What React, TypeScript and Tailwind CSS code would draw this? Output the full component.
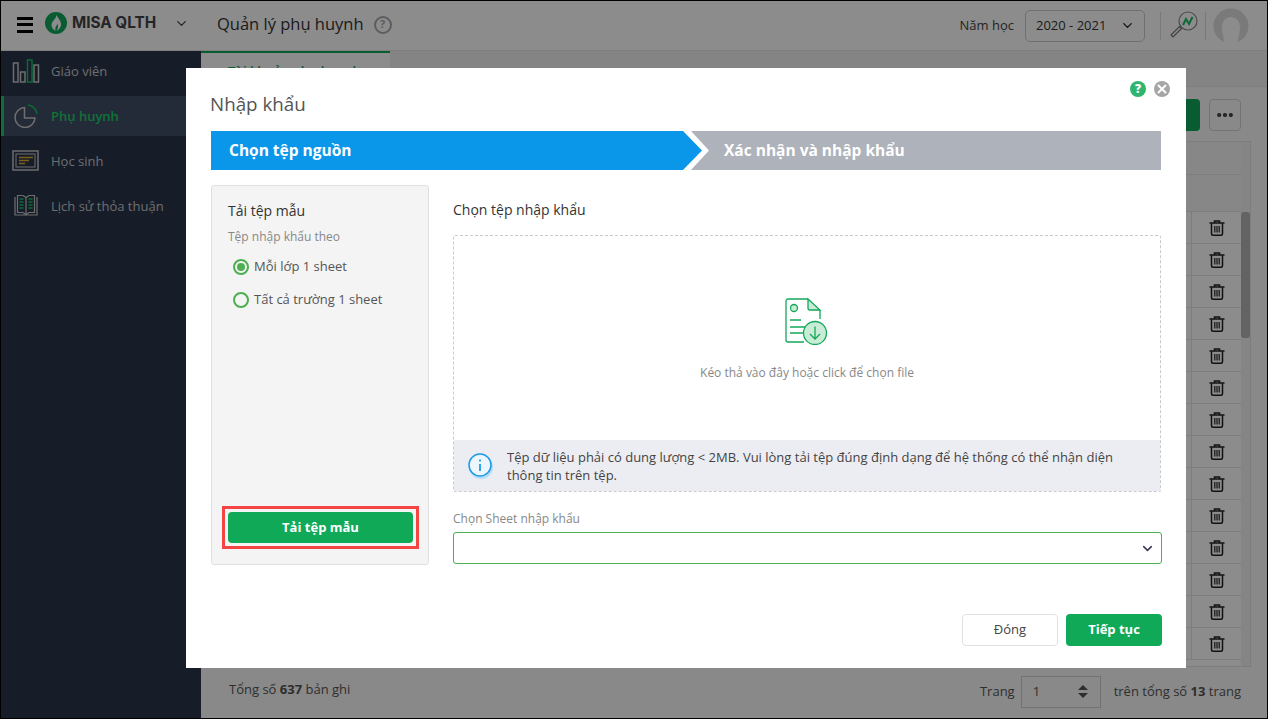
import { ChevronDown, Ellipsis } from "lucide-react";

const FONT = "font-['Open_Sans',sans-serif]";

const NAV_ITEMS = [
  { label: "Giáo viên", icon: <BarsIcon />, active: false },
  { label: "Phụ huynh", icon: <PieIcon />, active: true },
  { label: "Học sinh", icon: <BoardIcon />, active: false },
  { label: "Lịch sử thỏa thuận", icon: <BookIcon />, active: false },
];

const ROWS = Array.from({ length: 14 }, (_, i) => i);

function BarsIcon() {
  return (
    <svg width="28" height="24" viewBox="0 0 28 24" fill="none" stroke="#c8c8c8" strokeWidth="1.5">
      <rect x="1.5" y="4" width="4.5" height="19" />
      <rect x="8.5" y="13" width="4.5" height="10" />
      <rect x="15.5" y="1" width="4.5" height="22" stroke="#18c262" />
      <rect x="22" y="6" width="4.5" height="17" />
    </svg>
  );
}

function PieIcon() {
  return (
    <svg width="24" height="24" viewBox="0 0 24 24" fill="none" strokeWidth="1.5">
      <path d="M10.5 3.5a10 10 0 1 0 10.5 10.5H10.5z" stroke="#c8c8c8" />
      <path d="M14 1a10 10 0 0 1 9 9" stroke="#18c262" />
    </svg>
  );
}

function BoardIcon() {
  return (
    <svg width="28" height="22" viewBox="0 0 28 22" fill="none">
      <rect x="1" y="1" width="25" height="19" stroke="#c8c8c8" strokeWidth="1.5" />
      <rect x="4" y="4" width="19" height="13" stroke="#c8c8c8" strokeWidth="1" />
      <path d="M7 7.5h14M7 10.5h10M7 13.5h6" stroke="#e2b030" strokeWidth="1.5" />
    </svg>
  );
}

function BookIcon() {
  return (
    <svg width="28" height="24" viewBox="0 0 28 24" fill="none" strokeWidth="1.2">
      <path d="M3 3v18h22V3" stroke="#c8c8c8" />
      <path d="M5.5 1.5H11l3 2 3-2h5.5v17H17l-3 2-3-2H5.5z" stroke="#c8c8c8" />
      <path d="M14 3.5v17" stroke="#c8c8c8" />
      <path d="M7.5 5h4M7.5 8h4M7.5 11h4M7.5 14h4M16.5 5h4M16.5 8h4M16.5 11h4M16.5 14h4" stroke="#18c262" strokeWidth="1.5" />
    </svg>
  );
}

function TrashIcon() {
  return (
    <svg width="16" height="16" viewBox="0 0 16 16" fill="none" stroke="#1f1f1f" strokeWidth="1.5">
      <path d="M0.5 3h15M5.5 2.5V1h5v1.5" />
      <path d="M2.5 3.5v10.2A1.5 1.5 0 0 0 4 15.2h8a1.5 1.5 0 0 0 1.5-1.5V3.5" />
      <path d="M5.8 6v6.5M8 6v6.5M10.2 6v6.5" strokeWidth="1.2" />
    </svg>
  );
}

function Logo() {
  return (
    <svg width="22" height="22" viewBox="0 0 22 22">
      <circle cx="11" cy="11" r="11" fill="#12a65a" />
      <path d="M11.5 3c1 3 4.5 5 4.5 9.5 0 3-2 5-4.5 6.5 1.5-2.5 2-5 .8-7.5-.5 2-1.3 2.5-1.8 4-.4 1.3-.1 2.5.2 3.5C8 17.5 6.5 15.5 6.5 13c0-4 4.500-5.500 5-10z" fill="#fff" />
    </svg>
  );
}

function Magnifier() {
  return (
    <svg width="28" height="28" viewBox="0 0 28 28" fill="none">
      <circle cx="18" cy="10" r="9" stroke="#8a8a8a" strokeWidth="1.2" />
      <path d="M11.5 17.5L3 26l-2-2 8.5-8.5z" fill="#fff" stroke="#777" strokeWidth="1.2" />
      <path d="M13 14l3-6 3 5 3.5-7" stroke="#18c262" strokeWidth="2" />
    </svg>
  );
}

function FileIcon() {
  return (
    <svg width="44" height="48" viewBox="0 0 44 48" fill="none" stroke="#14a85b" strokeWidth="1.3">
      <path d="M24 2H4a2 2 0 0 0-2 2v39a2 2 0 0 0 2 2h16M36 13v9" />
      <path d="M24 2l12 11H26a2 2 0 0 1-2-2z" fill="#c9ecd6" />
      <circle cx="10" cy="11" r="3.5" fill="#c9ecd6" />
      <path d="M6 23h11M6 30h16M6 36h13" />
      <circle cx="31" cy="36" r="11.5" fill="#c9ecd6" />
      <path d="M31 29.5V42M26 37l5 5 5-5" />
    </svg>
  );
}

function InfoIcon() {
  return (
    <svg width="28" height="28" viewBox="0 0 28 28" fill="none">
      <circle cx="14" cy="15" r="12" fill="#b9dcf5" />
      <circle cx="13" cy="13" r="11" fill="#eef6fd" stroke="#1a9bea" strokeWidth="1.5" />
      <path d="M13 12v7" stroke="#1a9bea" strokeWidth="1.8" />
      <circle cx="13" cy="8.5" r="1.1" fill="#1a9bea" />
    </svg>
  );
}

function Radio({ label, checked }: { label: string; checked?: boolean }) {
  return (
    <div className="flex items-center gap-[5px] h-[16px] pl-[5px] text-[13px] text-[#555]">
      <span className="w-4 h-4 rounded-full border-2 border-[#4caf50] flex items-center justify-center">
        {checked && <span className="w-2 h-2 rounded-full bg-[#4caf50]" />}
      </span>
      {label}
    </div>
  );
}

export default function App() {
  return (
    <div className={`${FONT} relative w-[1268px] h-[719px] overflow-hidden border border-black bg-[#fff] flex flex-col`}>
      <header className="h-[50px] shrink-0 flex items-center bg-white border-b border-[#e8e8e8] text-[#333]">
        <div className="ml-4 w-4 mt-[-2px] flex flex-col gap-[3.5px]">
          <span className="h-[3px] bg-black" />
          <span className="h-[3px] bg-black" />
          <span className="h-[3px] bg-black" />
        </div>
        <div className="ml-3 mt-[-5px]">
          <Logo />
        </div>
        <span className="ml-[5px] mt-[-5px] font-['Inter',sans-serif] font-bold text-[15.3px] text-[#444] w-[86px] whitespace-nowrap">
          MISA QLTH
        </span>
        <ChevronDown size={15} strokeWidth={2} className="ml-[16px] mt-[-4px] text-[#444]" />
        <span className="ml-[28px] text-[16.5px] text-[#333] mt-[-2px]">Quản lý phụ huynh</span>
        <span className="ml-[10px] w-[18px] h-[18px] rounded-full border-2 border-[#aaa] text-[11px] font-bold text-[#aaa] flex items-center justify-center mt-[-2px]">
          ?
        </span>
        <div className="ml-auto flex items-center text-[13px]">
          <span className="text-[#444]">Năm học</span>
          <div className="ml-[11px] w-[120px] h-8 rounded-[5px] border border-[#ccc] flex items-center justify-between pl-[10px] pr-[9px] text-[#333]">
            2020 - 2021
            <ChevronDown size={15} strokeWidth={2.2} className="text-[#222]" />
          </div>
          <span className="ml-[15px] w-px h-7 bg-[#ddd]" />
          <span className="ml-[9px] mt-[-2px]">
            <Magnifier />
          </span>
          <span className="ml-[7px] w-px h-7 bg-[#ddd]" />
          <svg width="36" height="36" viewBox="0 0 36 36" fill="none" className="ml-[7px] mr-[18px]">
            <circle cx="18" cy="18" r="17.5" fill="#dedede" />
            <path d="M10.5 36C12 31 9 27 9 19c0-6 4-10 9-10s9 4 9 10c0 8-3 12-1.5 17z" fill="#fff" />
          </svg>
        </div>
      </header>

      <div className="flex-1 min-h-0 flex">
        <aside className="w-[200px] shrink-0 bg-[#28354c] flex flex-col gap-[5px]">
          {NAV_ITEMS.map((item) => (
            <div
              key={item.label}
              className={`h-10 flex items-center border-l-[3px] text-[13px] ${
                item.active
                  ? "bg-[#434f66] border-[#1bc768] text-[#1ad068] font-semibold"
                  : "border-transparent text-[#c8c8c8]"
              }`}
            >
              <span className="w-[47px] pr-[3px] flex justify-center shrink-0">{item.icon}</span>
              <span className="mt-[2px]">{item.label}</span>
            </div>
          ))}
        </aside>

        <main className="flex-1 min-w-0 flex flex-col bg-[#fafafa]">
          <div className="h-[36px] shrink-0 bg-[#f0f0f0] border-b border-[#e5e5e5]">
            <div className="w-[189px] h-[36px] bg-white border-t-2 border-[#12a65a] pl-[27px] pt-[9px] text-[13px] font-semibold text-[#12a65a] whitespace-nowrap">
              Tài khoản phụ huynh
            </div>
          </div>
          <div className="h-[54px] shrink-0 flex justify-end items-center gap-[9px] pr-[26px] pt-[1px]">
            <span className="w-[120px] h-8 rounded-[4px] bg-[#12a65a]" />
            <span className="w-8 h-8 rounded-[4px] border border-[#d4d4d4] flex items-center justify-center">
              <Ellipsis size={20} strokeWidth={3} className="text-[#333]" />
            </span>
          </div>
          <div className="flex-1 min-h-0 ml-[28px] mr-[16px] border border-[#e3e3e3] overflow-hidden flex">
            <div className="flex-1 min-w-0 bg-white">
              <div className="h-[70px] border-b border-[#e3e3e3] bg-[#f6f6f6] flex flex-col">
                <div className="h-[33px] border-b border-[#e3e3e3]" />
              </div>
              {ROWS.map((row) => (
                <div key={row} className="h-8 border-b border-[#e3e3e3] flex justify-end">
                  <div className="w-[50px] border-l border-[#e3e3e3] flex items-center justify-center">
                    <TrashIcon />
                  </div>
                </div>
              ))}
            </div>
            <div className="w-[9px] shrink-0 bg-[#f2f2f2] pt-[70px]">
              <div className="h-[126px] rounded-[3px] bg-[#b4b4b4]" />
            </div>
          </div>
          <footer className="h-[51px] shrink-0 pl-[28px] pr-[26px] flex items-center text-[13px] text-[#555]">
            <span className="mt-[-6px]">
              Tổng số <b>637</b> bản ghi
            </span>
            <span className="ml-auto mt-[-2px]">Trang</span>
            <div className="ml-[6px] w-[80px] h-8 border border-[#cfcfcf] flex items-center justify-between pl-[11px] pr-[12px] mt-[-2px]">
              1
              <span className="flex flex-col gap-[3px]">
                <span className="w-0 h-0 border-x-[5px] border-x-transparent border-b-[5px] border-b-[#555]" />
                <span className="w-0 h-0 border-x-[5px] border-x-transparent border-t-[5px] border-t-[#555]" />
              </span>
            </div>
            <span className="ml-[13px] mt-[-2px]">
              trên tổng số <b>13</b> trang
            </span>
          </footer>
        </main>
      </div>

      {/* overlay + modal */}
      <div className="absolute inset-0 bg-black/45">
        <div className="ml-[185px] mt-[67px] w-[1000px] h-[600px] bg-white flex flex-col text-[#333]">
          <div className="flex justify-end items-center gap-2 pt-[13px] pr-4">
            <span className="w-4 h-4 rounded-full bg-[#2fb56f] text-white text-[12px] font-extrabold flex items-center justify-center">
              ?
            </span>
            <span className="w-4 h-4 rounded-full bg-[#a6a6a6] flex items-center justify-center">
              <svg width="10" height="10" viewBox="0 0 10 10" stroke="#fff" strokeWidth="2">
                <path d="M1 1l8 8M9 1l-8 8" />
              </svg>
            </span>
          </div>
          <h1 className="mt-[-5px] ml-6 h-[24px] leading-6 text-[18.8px] text-[#555]">Nhập khẩu</h1>

          <div className="mt-[15px] ml-[25px] w-[950px] h-[39px] shrink-0 flex text-[15.5px] font-bold text-white">
            <div className="w-[491px] shrink-0 bg-[#0a97ea] pl-[18px] flex items-center [clip-path:polygon(0_0,472px_0,491px_50%,472px_100%,0_100%)]">
              Chọn tệp nguồn
            </div>
            <div className="flex-1 -ml-[11px] bg-[#aeb2ba] pl-[33px] flex items-center [clip-path:polygon(0_0,100%_0,100%_100%,0_100%,18px_50%)]">
              Xác nhận và nhập khẩu
            </div>
          </div>

          <div className="mt-[15px] ml-[25px] w-[950px] h-[380px] flex gap-6">
            <div className="w-[218px] shrink-0 bg-[#f4f4f4] border border-[#e0e0e0] rounded-[3px] flex flex-col">
              <div className="pl-[16px] pt-[15px] text-sm font-medium text-[#333] leading-5">Tải tệp mẫu</div>
              <div className="pl-[16px] mt-[8px] text-xs text-[#888] leading-4">Tệp nhập khẩu theo</div>
              <div className="mt-[14px] ml-[16px] flex flex-col gap-[17px]">
                <Radio label="Mỗi lớp 1 sheet" checked />
                <Radio label="Tất cả trường 1 sheet" />
              </div>
              <div className="mt-auto mb-[15px] ml-[10px] mr-[9px] border-[3px] border-[#f44444] p-[3px]">
                <div className="h-[31px] rounded-[4px] bg-[#10a958] text-white text-[13px] font-bold flex items-center justify-center">
                  Tải tệp mẫu
                </div>
              </div>
            </div>

            <div className="flex-1 min-w-0 flex flex-col">
              <div className="h-[50px] pt-[15px] text-sm font-medium leading-5 text-[#333]">Chọn tệp nhập khẩu</div>
              <div className="h-[257px] border border-dashed border-[#c9c9c9] rounded-[2px] flex flex-col">
                <div className="flex-1 flex flex-col items-center pt-[61px]">
                  <span className="ml-[-2px]">
                    <FileIcon />
                  </span>
                  <span className="mt-[20px] text-xs leading-4 text-[#888]">Kéo thả vào đây hoặc click để chọn file</span>
                </div>
                <div className="h-[51px] bg-[#ecedf2] flex items-center pl-[13px] pr-[40px] text-[13px] leading-[18px] text-[#444]">
                  <span className="shrink-0 mt-[1px]">
                    <InfoIcon />
                  </span>
                  <span className="ml-[12px]">
                    Tệp dữ liệu phải có dung lượng &lt; 2MB. Vui lòng tải tệp đúng định dạng để hệ thống có thể nhận diện thông tin trên tệp.
                  </span>
                </div>
              </div>
              <div className="mt-[19px] text-xs leading-4 text-[#888]">Chọn Sheet nhập khẩu</div>
              <div className="mt-[5px] mr-[-1px] h-8 border border-[#4caf50] rounded-[3px] flex items-center justify-end pr-[6px]">
                <ChevronDown size={15} strokeWidth={2.5} className="text-[#3a3a5a]" />
              </div>
            </div>
          </div>

          <div className="mt-[49px] flex justify-end gap-2 pr-6 text-[13px]">
            <button type="button" className="w-[96px] h-8 rounded-[4px] border border-[#e2e2e2] bg-white text-[#444]">
              Đóng
            </button>
            <button type="button" className="w-[96px] h-8 rounded-[4px] bg-[#10a958] text-white font-bold">
              Tiếp tục
            </button>
          </div>
        </div>
      </div>
    </div>
  );
}
